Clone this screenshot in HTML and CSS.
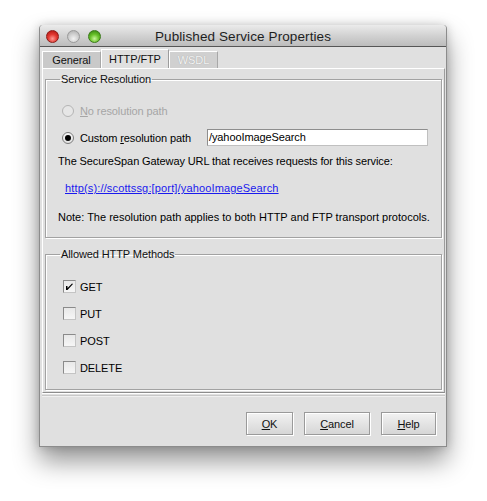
FILE: index.html
```html
<!DOCTYPE html>
<html>
<head>
<meta charset="utf-8">
<link rel="stylesheet" href="styles.css">
</head>
<body>
<div class="window">
  <div class="titlebar">
    <div class="lights">
      <span class="light red"></span>
      <span class="light grey"></span>
      <span class="light green"></span>
    </div>
    <div class="title">Published Service Properties</div>
  </div>
  <div class="content">
    <div class="tabs">
      <div class="tab">General</div>
      <div class="tab selected">HTTP/FTP</div>
      <div class="tab disabled">WSDL</div>
    </div>
    <div class="panel">
      <fieldset class="group group-resolution">
        <legend>Service Resolution</legend>
        <div class="row radio-row disabled-row">
          <span class="radio"></span>
          <span class="label"><u>N</u>o resolution path</span>
        </div>
        <div class="row radio-row custom-row">
          <span class="radio checked"></span>
          <span class="label">Custom <u>r</u>esolution path</span>
          <div class="textfield">/yahooImageSearch</div>
        </div>
        <div class="desc">The SecureSpan Gateway URL that receives requests for this service:</div>
        <div class="link"><a href="#">http(s)://scottssg:[port]/yahooImageSearch</a></div>
        <div class="desc note">Note: The resolution path applies to both HTTP and FTP transport protocols.</div>
      </fieldset>
      <fieldset class="group group-methods">
        <legend>Allowed HTTP Methods</legend>
        <div class="row check-row">
          <span class="checkbox checked"><svg width="11" height="11" viewBox="0 0 11 11"><path d="M2 5 L2 9 L3.5 9 L9 3 L8 2.5 L3.6 7 L3.4 5 Z" fill="#000"/></svg></span>
          <span class="label">GET</span>
        </div>
        <div class="row check-row">
          <span class="checkbox"></span>
          <span class="label">PUT</span>
        </div>
        <div class="row check-row">
          <span class="checkbox"></span>
          <span class="label">POST</span>
        </div>
        <div class="row check-row">
          <span class="checkbox"></span>
          <span class="label">DELETE</span>
        </div>
      </fieldset>
    </div>
    <div class="footer">
      <button class="btn btn-ok"><u>O</u>K</button>
      <button class="btn btn-cancel"><u>C</u>ancel</button>
      <button class="btn btn-help"><u>H</u>elp</button>
    </div>
  </div>
</div>
</body>
</html>
```

FILE: styles.css
```css
html, body {
  margin: 0;
  padding: 0;
  background: #ffffff;
}
body {
  width: 487px;
  height: 501px;
  overflow: hidden;
  font-family: "Liberation Sans", Arial, sans-serif;
  font-size: 11px;
  letter-spacing: -0.1px;
  white-space: nowrap;
  color: #000;
}
.window {
  margin: 25px 0 0 39px;
  width: 406px;
  height: 421px;
  border: 1px solid #8c8c8c;
  border-top: none;
  border-radius: 4px 4px 0 0;
  background: #e0e0e0;
  box-shadow: 0 14px 26px rgba(0,0,0,0.42), 0 0 10px rgba(0,0,0,0.18);
  display: flex;
  flex-direction: column;
}
.titlebar {
  height: 21px;
  border-bottom: 1px solid #565656;
  border-radius: 4px 4px 0 0;
  background: linear-gradient(#ebebeb, #d2d2d2 50%, #bcbcbc);
  display: flex;
  align-items: center;
  position: relative;
  flex: none;
}
.lights {
  display: flex;
  gap: 8px;
  margin-left: 6px;
  margin-top: 1px;
}
.light {
  width: 13px;
  height: 13px;
  border-radius: 50%;
  box-sizing: border-box;
}
.light.red {
  background: radial-gradient(circle at 50% 70%, #ff9a94 0%, #e33a32 45%, #a80f0b 100%);
  border: 1px solid #8c1c18;
}
.light.grey {
  background: radial-gradient(circle at 50% 70%, #f2f2f2 0%, #cfcfcf 50%, #a8a8a8 100%);
  border: 1px solid #9a9a9a;
}
.light.green {
  background: radial-gradient(circle at 50% 70%, #c8f59a 0%, #6ac22a 45%, #2f7a0c 100%);
  border: 1px solid #3a7a18;
}
.title {
  position: absolute;
  left: 0;
  right: 0;
  top: 0;
  height: 21px;
  line-height: 23px;
  text-align: center;
  font-size: 13.5px;
  color: #1e1e1e;
  letter-spacing: 0.1px;
}
.content {
  flex: 1;
  display: flex;
  flex-direction: column;
  padding: 4px 1px 0 2px;
}
.tabs {
  display: flex;
  height: 17px;
  padding-left: 0;
}
.tab {
  box-sizing: border-box;
  height: 17px;
  padding-top: 2px;
  text-align: center;
  font-size: 11px;
  border-top: 1px solid #ffffff;
  border-left: 1px solid #ffffff;
  border-right: 1px solid #a8a8a8;
  background: #c9c9c9;
  color: #111;
}
.tab:nth-child(1) { width: 59px; }
.tab.selected {
  width: 68px;
  height: 19px;
  margin-top: -2px;
  padding-top: 3px;
  background: #e0e0e0;
  border-right: 1px solid #9c9c9c;
}
.tab.disabled {
  width: 49px;
  background: #d0d0d0;
  color: #f4f4f4;
  text-shadow: 0 0 1px #9a9a9a;
}
.panel {
  border-top: 1px solid #ffffff;
  border-left: 1px solid #ffffff;
  border-right: 1px solid #9c9c9c;
  border-bottom: 1px solid #8c8c8c;
  box-shadow: 0 1px 0 #ffffff;
  padding: 4px 2px 2px 2px;
  display: flex;
  flex-direction: column;
  gap: 10px;
}
.group {
  margin: 0;
  border: 1px solid #a2a2a2;
  box-shadow: 1px 1px 0 #ffffff, inset 1px 1px 0 #ffffff;
  padding: 0 12px;
  min-width: 0;
}
.group legend {
  margin-left: 2px;
  padding: 0 1px;
  font-size: 11px;
  line-height: 13px;
  color: #111;
}
.group-resolution {
  padding-top: 16px;
  padding-bottom: 13px;
}
.row {
  display: flex;
  align-items: center;
}
.radio-row {
  padding-left: 4px;
  height: 17px;
}
.custom-row {
  margin-top: 10px;
}
.radio {
  width: 12px;
  height: 12px;
  box-sizing: border-box;
  border-radius: 50%;
  border: 1px solid #7c7c7c;
  background: linear-gradient(#f8f8f8, #e2e2e2);
  margin-right: 6px;
  display: flex;
  align-items: center;
  justify-content: center;
  flex: none;
}
.radio.checked::after {
  content: "";
  width: 6px;
  height: 6px;
  border-radius: 50%;
  background: #000;
}
.disabled-row .radio {
  border-color: #b4b4b4;
  background: #e6e6e6;
}
.disabled-row .label {
  color: #a6a6a6;
}
.custom-row .label {
  width: 111px;
  flex: none;
}
.textfield {
  margin-left: 16px;
  width: 221px;
  height: 17px;
  box-sizing: border-box;
  border: 1px solid #8e8e8e;
  border-bottom-color: #c0c0c0;
  border-right-color: #c0c0c0;
  background: #ffffff;
  padding-left: 1px;
  line-height: 15px;
  flex: none;
}
.desc {
  margin-top: 9px;
  line-height: 13px;
}
.link {
  margin-top: 14px;
  padding-left: 7px;
  line-height: 13px;
  letter-spacing: 0.15px;
}
.link a {
  color: #1a1aee;
  text-decoration: underline;
}
.note {
  margin-top: 16px;
  letter-spacing: 0;
}
.group-methods {
  padding-top: 19px;
  padding-bottom: 15px;
  display: flex;
  flex-direction: column;
  gap: 14px;
}
.check-row {
  padding-left: 5px;
  height: 13px;
}
.checkbox {
  width: 13px;
  height: 13px;
  box-sizing: border-box;
  border: 1px solid #8a8a8a;
  border-right-color: #c4c4c4;
  border-bottom-color: #c4c4c4;
  background: linear-gradient(#e8e8e8, #f6f6f6);
  margin-right: 4px;
  display: flex;
  align-items: center;
  justify-content: center;
}
.checkbox svg {
  display: block;
}
.footer {
  margin-top: 2px;
  border-top: 1px solid #c8c8c8;
  box-shadow: inset 0 1px 0 #f0f0f0;
  flex: 1;
  display: flex;
  justify-content: flex-end;
  align-items: flex-start;
  padding: 16px 9px 0 0;
  gap: 11px;
}
.btn {
  font-family: "Liberation Sans", Arial, sans-serif;
  font-size: 11px;
  letter-spacing: -0.1px;
  color: #111;
  height: 23px;
  box-sizing: border-box;
  border: 1px solid #9a9a9a;
  box-shadow: inset 1px 1px 0 #ffffff, 1px 1px 0 #ffffff;
  background: linear-gradient(#f2f2f2, #d6d6d6);
  padding: 0;
  margin: 0;
}
.btn-ok { width: 47px; }
.btn-cancel { width: 66px; }
.btn-help { width: 55px; }
```
